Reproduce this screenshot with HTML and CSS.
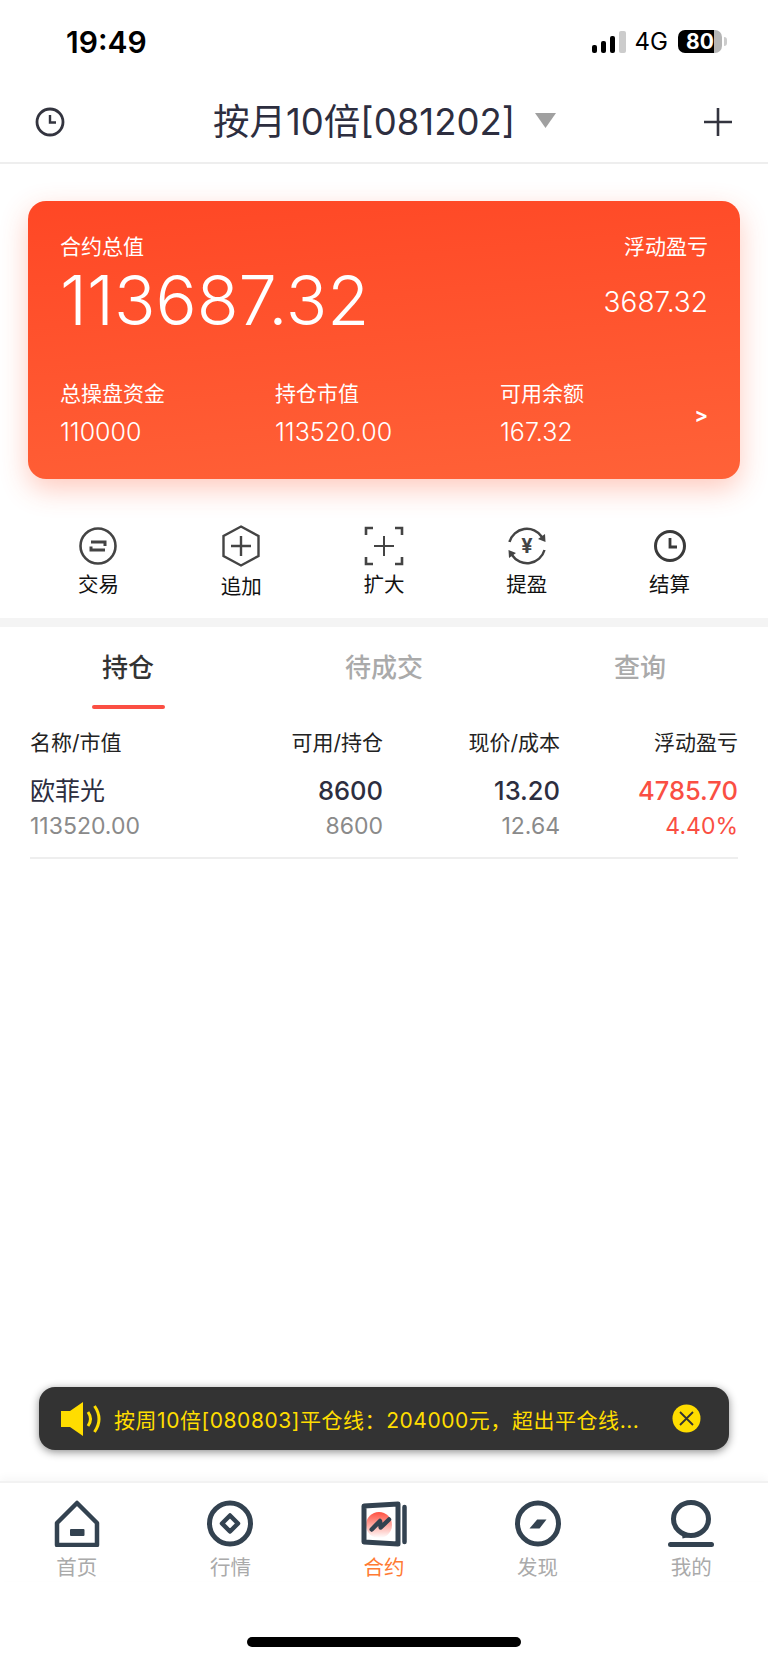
FILE: index.html
```html
<!DOCTYPE html>
<html lang="zh-CN">
<head>
  <meta charset="UTF-8" />
  <meta name="viewport" content="width=device-width, initial-scale=1.0"/>
  <title>合约</title>
  <link rel="stylesheet" href="styles.css">
</head>
<body>
<div class="page">

  <div class="status">
    <span class="status-time">19:49</span>
    <div class="status-right">
      <div class="signal">
        <i class="bar1"></i><i class="bar2"></i><i class="bar3"></i><i class="bar4"></i>
      </div>
      <span class="status-net">4G</span>
      <div class="battery">80</div>
    </div>
  </div>

  <header class="nav">
    <svg class="nav-clock" width="30" height="30" viewBox="0 0 30 30" fill="none" stroke="#33343f" stroke-width="2.8">
      <circle cx="15" cy="15" r="13"/>
      <path d="M15 8v7.5h6" stroke-width="2.4"/>
    </svg>
    <div class="nav-title">
      <span>按月10倍[081202]</span>
      <svg class="nav-caret" width="21" height="15" viewBox="0 0 21 15"><path d="M0 0H21L10.5 15Z" fill="#a0a0a0"/></svg>
    </div>
    <svg width="28" height="28" viewBox="0 0 28 28" stroke="#33343f" stroke-width="2.6"><path d="M0 14H28M14 0V28"/></svg>
  </header>

  <section class="card">
    <div class="card-top">
      <div>
        <div class="card-label">合约总值</div>
        <div class="card-total">113687.32</div>
      </div>
      <div class="card-float">
        <div class="card-label">浮动盈亏</div>
        <div class="card-float-value">3687.32</div>
      </div>
    </div>
    <div class="card-bottom">
      <div class="card-col col-a">
        <div class="card-label">总操盘资金</div>
        <div class="card-value">110000</div>
      </div>
      <div class="card-col col-b">
        <div class="card-label">持仓市值</div>
        <div class="card-value">113520.00</div>
      </div>
      <div class="card-col col-c">
        <div class="card-label">可用余额</div>
        <div class="card-value">167.32</div>
      </div>
      <span class="card-more">&gt;</span>
    </div>
  </section>

  <nav class="actions">
    <div class="action">
      <svg width="40" height="42" viewBox="0 0 40 42" fill="none" stroke="#444" stroke-width="2.6">
        <circle cx="20" cy="21" r="17.5"/>
        <path d="M13 17H27V21M27 25H13V21.5" stroke-width="3"/>
      </svg>
      <span>交易</span>
    </div>
    <div class="action action-add">
      <svg width="40" height="42" viewBox="0 0 40 42" fill="none" stroke="#444" stroke-width="2.4">
        <path d="M20 1.5L37.5 11V31L20 40.5L2.500 31V11Z"/>
        <path d="M20 11V31M10 21H30"/>
      </svg>
      <span>追加</span>
    </div>
    <div class="action">
      <svg width="40" height="42" viewBox="0 0 40 42" fill="none" stroke="#444" stroke-width="2.6">
        <path d="M2 10V3H9M31 3H38V10M2 32V39H9M31 39H38V32"/>
        <path d="M20 11V31M10 21H30" stroke-width="2"/>
      </svg>
      <span>扩大</span>
    </div>
    <div class="action">
      <svg width="40" height="42" viewBox="0 0 40 42" fill="none" stroke="#444" stroke-width="2.4">
        <path d="M2.500 17A18 18 0 0 1 35 12"/>
        <path d="M37.500 25A18 18 0 0 1 5 30"/>
        <path d="M38 9L38.500 17L31 14Z M2 33L1.500 25L9 28Z" fill="#444" stroke="none"/>
        <text class="yen" x="20" y="28" text-anchor="middle">¥</text>
      </svg>
      <span>提盈</span>
    </div>
    <div class="action">
      <svg width="40" height="42" viewBox="0 0 40 42" fill="none" stroke="#3a3a3a" stroke-width="3">
        <circle cx="20" cy="21" r="14.500"/>
        <path d="M20 13V22H27" stroke-width="2.800"/>
      </svg>
      <span>结算</span>
    </div>
  </nav>

  <div class="gap"></div>

  <div class="tabs">
    <div class="tab tab-on">持仓</div>
    <div class="tab">待成交</div>
    <div class="tab">查询</div>
  </div>

  <div class="grid grid-head">
    <div>名称/市值</div>
    <div class="num">可用/持仓</div>
    <div class="num">现价/成本</div>
    <div class="num">浮动盈亏</div>
  </div>
  <div class="grid grid-main">
    <div class="stock-name">欧菲光</div>
    <div class="num">8600</div>
    <div class="num">13.20</div>
    <div class="num up">4785.70</div>
  </div>
  <div class="grid grid-sub">
    <div>113520.00</div>
    <div class="num">8600</div>
    <div class="num">12.64</div>
    <div class="num up">4.40%</div>
  </div>
  <div class="divider"></div>

  <div class="spacer"></div>

  <div class="toast">
    <svg width="41" height="34" viewBox="0 0 41 34" fill="none">
      <path d="M0 9H9L22 0V34L9 25H0Z" fill="#ffdd00"/>
      <path d="M27 10Q32 17 27 24M33.500 4Q42.500 17 33.500 30" stroke="#ffdd00" stroke-width="3"/>
    </svg>
    <span class="toast-text">按周10倍[080803]平仓线：204000元，超出平仓线...</span>
    <svg class="toast-close" width="29" height="29" viewBox="0 0 29 29" fill="none">
      <circle cx="14.500" cy="14.500" r="14" fill="#ffdd00"/>
      <path d="M8 8L21 21M21 8L8 21" stroke="#333" stroke-width="1.800"/>
    </svg>
  </div>

  <footer class="tabbar">
    <div class="tabbar-item">
      <svg width="46" height="47" viewBox="0 0 46 47" fill="none" stroke="#334250" stroke-width="4.500" stroke-linejoin="round">
        <path d="M23 3L3 23V45H43V23Z"/>
        <rect x="16" y="29" width="14.500" height="7" rx="1" fill="#334250" stroke="none"/>
      </svg>
      <span>首页</span>
    </div>
    <div class="tabbar-item">
      <svg width="46" height="47" viewBox="0 0 46 47" fill="none" stroke="#334250" stroke-width="5">
        <circle cx="23" cy="23.500" r="20.500"/>
        <path d="M23 15.500L31 23.500L23 31.500L15 23.500Z" stroke-width="4.500" stroke-linejoin="round"/>
      </svg>
      <span>行情</span>
    </div>
    <div class="tabbar-item tabbar-on">
      <svg width="46" height="47" viewBox="0 0 46 47" fill="none" stroke="#334250" stroke-width="5" stroke-linejoin="round">
        <defs>
          <linearGradient id="hot" x1="0" y1="0" x2="0" y2="1">
            <stop offset="0" stop-color="#ff5040"/>
            <stop offset="1" stop-color="#ffffff"/>
          </linearGradient>
        </defs>
        <circle cx="18" cy="25" r="13" fill="url(#hot)" stroke="none"/>
        <path d="M3 6L37 4V44L3 42Z"/>
        <path d="M43.500 7V42" stroke-width="4.500" stroke-linecap="round"/>
        <path d="M10.700 29.500L19 21L19.700 27.500L28 19.500" stroke-width="4.500" stroke-linecap="round"/>
      </svg>
      <span>合约</span>
    </div>
    <div class="tabbar-item">
      <svg width="46" height="47" viewBox="0 0 46 47" fill="none" stroke="#334250" stroke-width="5">
        <circle cx="23" cy="23.500" r="20.500"/>
        <path d="M14.500 28.500L22.200 19.500H31.500L24.500 28.500Z" fill="#334250" stroke="none"/>
      </svg>
      <span>发现</span>
    </div>
    <div class="tabbar-item">
      <svg width="46" height="47" viewBox="0 0 46 47" fill="none" stroke="#334250" stroke-width="5">
        <ellipse cx="23" cy="19" rx="17.500" ry="16.500"/>
        <path d="M14 31L14.500 38.500L25 36Z" fill="#334250" stroke="none"/>
        <path d="M2.500 44.500H43.500" stroke-linecap="round"/>
      </svg>
      <span>我的</span>
    </div>
  </footer>

  <div class="home-bar"></div>

</div>
</body>
</html>
```

FILE: styles.css
```css
* {
  box-sizing: border-box;
}

body {
  margin: 0;
  background: #fff;
  font-family: Inter, "Noto Sans CJK SC", sans-serif;
  color: #2d2e3f;
}

.page {
  position: relative;
  width: 768px;
  height: 1663px;
  overflow: hidden;
  display: flex;
  flex-direction: column;
  background: #fff;
}

/* status bar */
.status {
  height: 83px;
  flex-shrink: 0;
  display: flex;
  align-items: center;
  justify-content: space-between;
  padding: 0 46px 0 66px;
  color: #000;
}

.status-time {
  font-size: 30px;
  font-weight: 600;
}

.status-right {
  display: flex;
  align-items: center;
}

.signal {
  display: flex;
  align-items: flex-end;
  gap: 4px;
  height: 22px;
}

.signal i {
  display: block;
  width: 5px;
  border-radius: 2px;
  background: #000;
}

.bar1 { height: 8px; }
.bar2 { height: 12px; }
.bar3 { height: 17px; }
.signal .bar4 { height: 22px; width: 7px; background: #ccc; }

.status-net {
  margin-left: 9px;
  font-size: 24px;
  line-height: 24px;
}

.battery {
  position: relative;
  margin-left: 10px;
  width: 44px;
  height: 23px;
  padding-left: 8px;
  border-radius: 7px;
  background: linear-gradient(to right, #000 82%, #b5b5b5 82%);
  color: #fff;
  font-size: 21px;
  font-weight: 700;
  line-height: 23px;
}

.battery::after {
  content: "";
  position: absolute;
  left: 46px;
  top: 7px;
  width: 3px;
  height: 9px;
  border-radius: 0 3px 3px 0;
  background: #ccc;
}

/* title bar */
.nav {
  height: 81px;
  flex-shrink: 0;
  display: flex;
  align-items: center;
  justify-content: space-between;
  padding: 0 36px 2px 35px;
  border-bottom: 2px solid #eee;
}

.nav-title {
  display: flex;
  align-items: center;
  gap: 20px;
  font-size: 36.500px;
  line-height: 48px;
}

.nav-caret {
  margin-top: -2px;
}

/* red card */
.card {
  flex-shrink: 0;
  margin: 37px 28px 0;
  height: 278px;
  padding: 35px 32px 0;
  border-radius: 18px;
  background: linear-gradient(175deg, #ff4725, #ff6238);
  box-shadow: 0 10px 28px rgba(255, 80, 40, 0.3);
  color: #fff;
}

.card-top {
  display: flex;
  justify-content: space-between;
}

.card-label {
  font-size: 21px;
  line-height: 22px;
}

.card-total {
  margin-top: 13px;
  font-size: 68.500px;
  font-weight: 300;
  line-height: 60px;
}

.card-float {
  text-align: right;
}

.card-float-value {
  margin-top: 27px;
  font-size: 28px;
  font-weight: 300;
  line-height: 34px;
}

.card-bottom {
  display: flex;
  align-items: center;
  margin-top: 52px;
}

.col-a { width: 215px; }
.col-b { width: 225px; }
.col-c { flex: 1; }

.card-value {
  margin-top: 12px;
  font-size: 25px;
  font-weight: 300;
  line-height: 30px;
}

.card-more {
  font-size: 20px;
  font-weight: 700;
}

/* shortcuts */
.actions {
  flex-shrink: 0;
  display: grid;
  grid-template-columns: repeat(5, 1fr);
  padding: 46px 27px 0;
}

.action {
  display: flex;
  flex-direction: column;
  align-items: center;
  font-size: 20.500px;
  line-height: 26px;
  color: #111;
}

.action span {
  margin-top: 5px;
}

.action-add span {
  margin-top: 7px;
}

.yen {
  font-size: 20px;
  font-weight: 700;
  fill: #444;
  stroke: none;
}

.gap {
  flex-shrink: 0;
  height: 9px;
  margin-top: 18px;
  background: #f4f4f4;
}

/* position tabs */
.tabs {
  flex-shrink: 0;
  display: grid;
  grid-template-columns: repeat(3, 1fr);
  height: 82px;
}

.tab {
  display: flex;
  flex-direction: column;
  align-items: center;
  padding-top: 23px;
  font-size: 26px;
  line-height: 36px;
  font-weight: 500;
  color: #aaa;
}

.tab-on {
  color: #333;
}

.tab-on::after {
  content: "";
  width: 73px;
  height: 4px;
  margin-top: 19px;
  border-radius: 2px;
  background: #fb4f43;
}

/* position table */
.grid {
  flex-shrink: 0;
  display: grid;
  grid-template-columns: 173px 180px 177px 178px;
  padding: 0 30px;
}

.num {
  text-align: right;
}

.grid-head {
  margin-top: 22px;
  font-size: 21px;
  line-height: 24px;
  color: #222;
}

.grid-main {
  margin-top: 20px;
  font-size: 25.500px;
  font-weight: 500;
  line-height: 32px;
}

.stock-name {
  font-size: 25px;
  font-weight: 400;
}

.grid-sub {
  margin-top: 5px;
  font-size: 23px;
  line-height: 28px;
  color: #8a8a8a;
}

.up {
  color: #fa4f43;
}

.divider {
  flex-shrink: 0;
  height: 2px;
  margin: 17px 30px 0;
  background: #eee;
}

.spacer {
  flex: 1;
}

/* notice over the list */
.toast {
  position: absolute;
  left: 39px;
  bottom: 213px;
  width: 690px;
  height: 63px;
  display: flex;
  align-items: center;
  padding: 0 28px 0 22px;
  border-radius: 16px;
  background: #333;
  box-shadow: 0 2px 8px rgba(0, 0, 0, 0.45);
  color: #ffdd00;
}

.toast-text {
  margin-left: 12px;
  font-size: 21px;
  letter-spacing: 0.55px;
  white-space: nowrap;
}

.toast-close {
  margin-left: auto;
}

/* bottom tabs */
.tabbar {
  flex-shrink: 0;
  display: grid;
  grid-template-columns: repeat(5, 1fr);
  padding-top: 17px;
  border-top: 2px solid #f2f2f2;
  box-shadow: 0 -4px 8px rgba(0, 0, 0, 0.03);
}

.tabbar-item {
  display: flex;
  flex-direction: column;
  align-items: center;
  font-size: 20.500px;
  line-height: 26px;
  color: #aaa;
}

.tabbar-item span {
  margin-top: 8px;
}

.tabbar-on {
  color: #ff7a33;
}

.home-bar {
  flex-shrink: 0;
  width: 274px;
  height: 10px;
  margin: 56px auto 16px;
  border-radius: 5px;
  background: #000;
}
```
